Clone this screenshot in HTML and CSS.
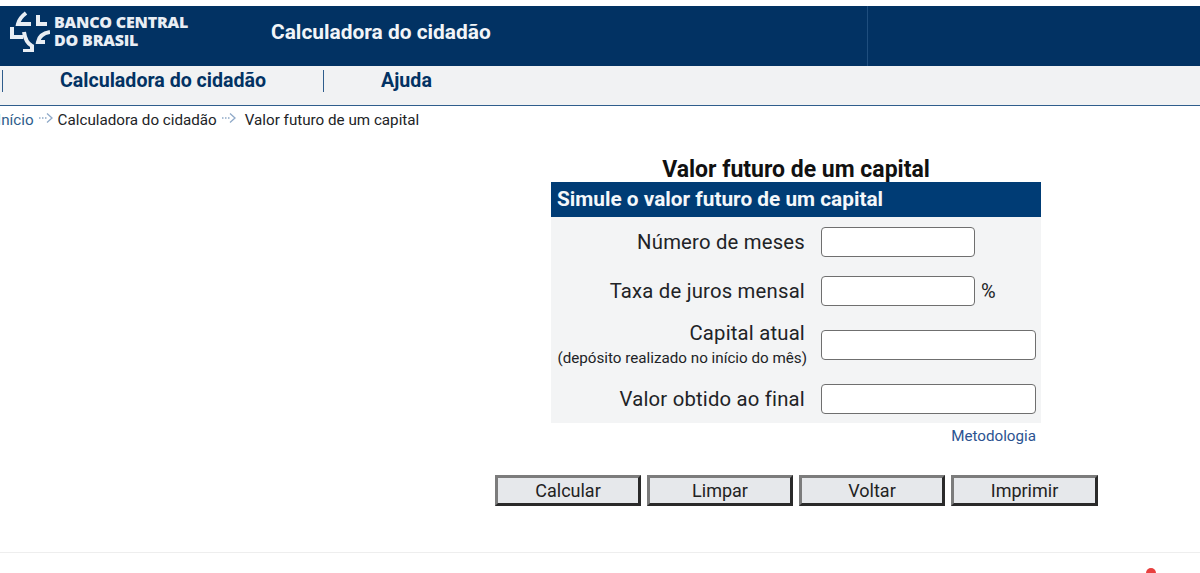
FILE: index.html
```html
<!DOCTYPE html>
<html lang="pt-BR">
<head>
  <meta charset="UTF-8" />
  <title>Valor futuro de um capital - Calculadora do cidadão</title>
  <link rel="stylesheet" href="styles.css">
</head>
<body>

  <header class="top-bar">
    <div class="logo">
      <svg class="logo-icon" width="42" height="42" viewBox="0 0 42 42" fill="none" stroke="#e9eef4" stroke-width="4">
        <path d="M18 3 C14 6 11 9 10 14 L23 14" />
        <path d="M30 5 L30 14 L39 14" />
        <path d="M4 17 L4 27 L15 27" />
        <path d="M16 22 C17 29 20 34 24 36 L24 41 L15 41" />
        <path d="M42 22 C36 23 31 26 30 32 L37 32" />
      </svg>
      <div class="logo-text">BANCO CENTRAL<br>DO BRASIL</div>
    </div>
    <div class="app-name">Calculadora do cidadão</div>
    <div class="top-end"></div>
  </header>

  <nav class="menu">
    <a class="menu-item menu-first" href="#">Calculadora do cidadão</a>
    <a class="menu-item" href="#">Ajuda</a>
  </nav>

  <div class="crumbs">
    <a href="#" class="crumb-first">Início</a>
    <svg class="crumb-arrow" width="16" height="12" viewBox="0 0 16 12" fill="none" stroke="#8fa9c8" stroke-width="1.3">
      <path d="M1 6 H9" stroke-dasharray="1.5 1.5" />
      <path d="M9 1.5 L14 6 L9 10.5" />
    </svg>
    <span>Calculadora do cidadão</span>
    <svg class="crumb-arrow" width="16" height="12" viewBox="0 0 16 12" fill="none" stroke="#8fa9c8" stroke-width="1.3">
      <path d="M1 6 H9" stroke-dasharray="1.5 1.5" />
      <path d="M9 1.5 L14 6 L9 10.5" />
    </svg>
    <span class="crumb-last">Valor futuro de um capital</span>
  </div>

  <main class="content">
    <h1>Valor futuro de um capital</h1>
    <form class="panel">
      <h2>Simule o valor futuro de um capital</h2>
      <div class="rows">
        <div class="row row-months">
          <label for="meses">Número de meses</label>
          <input id="meses" class="short" type="text" />
        </div>
        <div class="row row-rate">
          <label for="taxa">Taxa de juros mensal</label>
          <input id="taxa" class="short" type="text" />
          <span class="unit">%</span>
        </div>
        <div class="row row-capital">
          <label for="capital">Capital atual<small>(depósito realizado no início do mês)</small></label>
          <input id="capital" class="long" type="text" />
        </div>
        <div class="row row-final">
          <label for="final">Valor obtido ao final</label>
          <input id="final" class="long" type="text" />
        </div>
      </div>
    </form>
    <a class="method" href="#">Metodologia</a>
    <div class="buttons">
      <button type="button">Calcular</button>
      <button type="button">Limpar</button>
      <button type="button">Voltar</button>
      <button type="button" class="btn-last">Imprimir</button>
    </div>
  </main>

  <footer class="page-end">
    <span class="red-dot"></span>
  </footer>

</body>
</html>
```

FILE: styles.css
```css
html, body {
  height: 573px;
  overflow: hidden;
}
body {
  margin: 0;
  background: #fff;
  color: #212326;
  font-family: Roboto, "Liberation Sans", sans-serif;
}
a {
  text-decoration: none;
}

.top-bar {
  display: flex;
  height: 60px;
  margin-top: 6px;
  background: #023263;
}
.logo {
  display: flex;
  align-items: center;
  gap: 4px;
  width: 271px;
  padding: 0 0 10px 8px;
  box-sizing: border-box;
}
.logo-icon {
  flex: none;
}
.logo-text {
  color: #e9eef4;
  font-family: "Open Sans", sans-serif;
  font-size: 16px;
  font-weight: 800;
  line-height: 18px;
  letter-spacing: -0.2px;
}
.app-name {
  width: 596px;
  color: #f2f5f8;
  font-size: 20.9px;
  font-weight: 700;
  line-height: 52px;
}
.top-end {
  flex: 1;
  border-left: 1px solid #1f4e7e;
}

.menu {
  display: flex;
  height: 39px;
  background: #f1f2f3;
  border-bottom: 1px solid #2f5d8c;
}
.menu-item {
  color: #023263;
  font-size: 19.6px;
  font-weight: 700;
  line-height: 22px;
  height: 22px;
  margin-top: 4px;
  border-left: 1px solid #2f5d8c;
  padding: 0 57px 0 57px;
}
.menu-first {
  margin-left: 2px;
}

.crumbs {
  display: flex;
  align-items: center;
  height: 27px;
  margin-left: -3px;
  font-size: 15.2px;
}
.crumb-first {
  color: #2f5d8c;
}
.crumb-arrow {
  margin: -4px 4px 0 4px;
}
.crumb-last {
  margin-left: 4px;
}

.content {
  display: flex;
  flex-direction: column;
  width: 603px;
  height: 419px;
  margin-left: 495px;
}
h1 {
  width: 490px;
  margin: 24px 0 0 56px;
  color: #111;
  font-size: 23px;
  font-weight: 700;
  line-height: 25px;
  text-align: center;
}
.panel {
  width: 490px;
  margin-left: 56px;
  background: #f3f4f5;
}
h2 {
  margin: 0;
  padding-left: 6px;
  background: #003c75;
  color: #f4f7fa;
  font-size: 20.8px;
  font-weight: 700;
  line-height: 35px;
}
.rows {
  height: 206px;
}
.row {
  display: flex;
  align-items: center;
  font-size: 20.3px;
  letter-spacing: 0.2px;
}
.row-months {
  height: 49px;
}
.row-rate {
  height: 50px;
}
.row-capital {
  height: 58px;
}
.row-final {
  height: 49px;
}
label {
  display: block;
  width: 254px;
  text-align: right;
  line-height: 26px;
  flex: none;
}
label small {
  display: block;
  margin-right: -2px;
  font-size: 15.2px;
  letter-spacing: 0;
  line-height: 24px;
}
input {
  box-sizing: border-box;
  height: 30px;
  margin-left: 16px;
  padding: 0 6px;
  background: #fff;
  border: 1px solid #6f6f6f;
  border-radius: 4px;
}
.short {
  width: 154px;
}
.long {
  width: 215px;
}
.unit {
  margin-left: 6px;
  font-size: 20px;
  letter-spacing: 0;
}

.method {
  align-self: flex-end;
  margin: 3px 62px 0 0;
  color: #2c5391;
  font-size: 15.2px;
  line-height: 20px;
}
.buttons {
  display: flex;
  gap: 6px;
  margin-top: 29px;
}
button {
  box-sizing: border-box;
  width: 146px;
  height: 31px;
  padding: 0;
  background: #e6e8eb;
  border: 3px solid;
  border-color: #7c7c7c #2a2a2a #2a2a2a #7c7c7c;
  color: #222;
  font-family: Roboto, sans-serif;
  font-size: 18px;
}
.btn-last {
  width: 147px;
}

.page-end {
  position: relative;
  height: 21px;
  border-top: 1px solid #eeeeee;
}
.red-dot {
  position: absolute;
  top: 15px;
  left: 1146px;
  width: 10px;
  height: 10px;
  border-radius: 50%;
  background: #e8403f;
}
```
